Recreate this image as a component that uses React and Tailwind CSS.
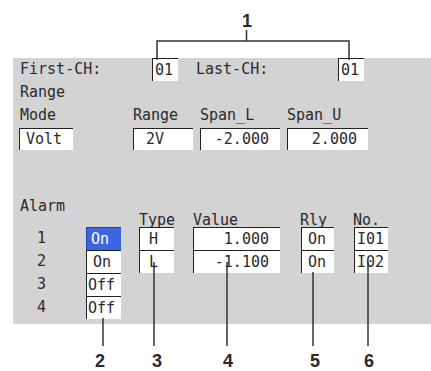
import React from 'react';

// sunken input field, dark edge on top and left
const Field = ({ w, children, align = 'left', active = false, pl = 2 }) => (
  <div
    className={`h-full border-t border-l flex items-center ${
      active ? 'bg-[#3b66e0] text-white border-[#1f3fa8]' : 'bg-white border-[#222]'
    } ${align === 'right' ? 'justify-end pr-[11px]' : ''}`}
    style={{ width: w, paddingLeft: align === 'right' ? 0 : pl }}
  >
    {children}
  </div>
);

const alarms = [
  { n: '1', mode: 'On', active: true, type: 'H', value: '1.000', rly: 'On', no: 'I01' },
  { n: '2', mode: 'On', type: 'L', value: '-1.100', rly: 'On', no: 'I02' },
  { n: '3', mode: 'Off' },
  { n: '4', mode: 'Off' },
];

export default function App() {
  return (
    <div className="relative w-[431px] h-[371px] bg-white text-[#2a2a2a] font-['DejaVu_Sans_Mono',monospace] text-[15px] whitespace-pre overflow-hidden">
      <div className="h-[56px]" />
      <div className="ml-[13px] w-[418px] h-[266px] bg-[#d3d3d3]">
        {/* channel row */}
        <div className="mt-[2px] h-[23px] flex items-center">
          <div className="ml-[7px] w-[132px]">First-CH:</div>
          <Field w={26}>01</Field>
          <div className="ml-[18px] w-[142px]">Last-CH:</div>
          <Field w={26}>01</Field>
        </div>
        <div className="h-[23px] leading-[23px] pl-[7px]">Range</div>
        <div className="h-[23px] flex items-center">
          <div className="ml-[7px] w-[113px]">Mode</div>
          <div className="w-[67px]">Range</div>
          <div className="w-[87px]">Span_L</div>
          <div>Span_U</div>
        </div>
        <div className="mt-[1px] h-[22px] flex">
          <div className="ml-[6px]" />
          <Field w={54} pl={6}>Volt</Field>
          <div className="w-[60px]" />
          <Field w={60} pl={12}>2V</Field>
          <div className="w-[7px]" />
          <Field w={80} align="right">-2.000</Field>
          <div className="w-[7px]" />
          <Field w={81} align="right">2.000</Field>
        </div>

        {/* alarm block */}
        <div className="mt-[48px] h-[16px] leading-[16px] pl-[7px]">Alarm</div>
        <div className="h-[13px] leading-[13px] flex">
          <div className="ml-[126px] w-[54px]">Type</div>
          <div className="w-[107px]">Value</div>
          <div className="w-[53px]">Rly</div>
          <div>No.</div>
        </div>
        {alarms.map((a) => (
          <div key={a.n} className="h-[23px] flex">
            <div className="ml-[24px] w-[49px] flex items-center">{a.n}</div>
            <Field w={35} active={a.active} pl={a.mode === 'Off' ? 1 : a.active ? 4 : 6}>{a.mode}</Field>
            {a.type && (
              <>
                <div className="w-[18px]" />
                <Field w={35} pl={9}>{a.type}</Field>
                <div className="w-[19px]" />
                <Field w={87} align="right">{a.value}</Field>
                <div className="w-[21px]" />
                <Field w={33} pl={6}>{a.rly}</Field>
                <div className="w-[20px]" />
                <Field w={34} pl={2}>{a.no}</Field>
              </>
            )}
          </div>
        ))}
      </div>

      {/* callouts */}
      <svg className="absolute inset-0 pointer-events-none" width="431" height="371">
        <g stroke="#333" strokeWidth="1.5" fill="none">
          <line x1="246.5" y1="30" x2="246.5" y2="41" />
          <polyline points="157,60 157,41 349,41 349,60" />
          <line x1="103" y1="318" x2="103" y2="346" />
          <line x1="154" y1="262" x2="154" y2="346" />
          <line x1="227" y1="262" x2="227" y2="346" />
          <line x1="313" y1="272" x2="313" y2="346" />
          <line x1="368" y1="262" x2="368" y2="346" />
        </g>
      </svg>
      <div className="absolute left-[240px] top-[12px] w-[14px] text-center leading-none font-['Liberation_Sans',sans-serif] font-bold text-[18px]">1</div>
      {[
        ['2', 'left-[93px]'],
        ['3', 'left-[150px]'],
        ['4', 'left-[221px]'],
        ['5', 'left-[308px]'],
        ['6', 'left-[362px]'],
      ].map(([t, c]) => (
        <div key={t} className={`absolute top-[352px] h-[18px] w-[14px] text-center leading-[18px] font-['Liberation_Sans',sans-serif] font-bold text-[18px] ${c}`}>{t}</div>
      ))}
    </div>
  );
}
